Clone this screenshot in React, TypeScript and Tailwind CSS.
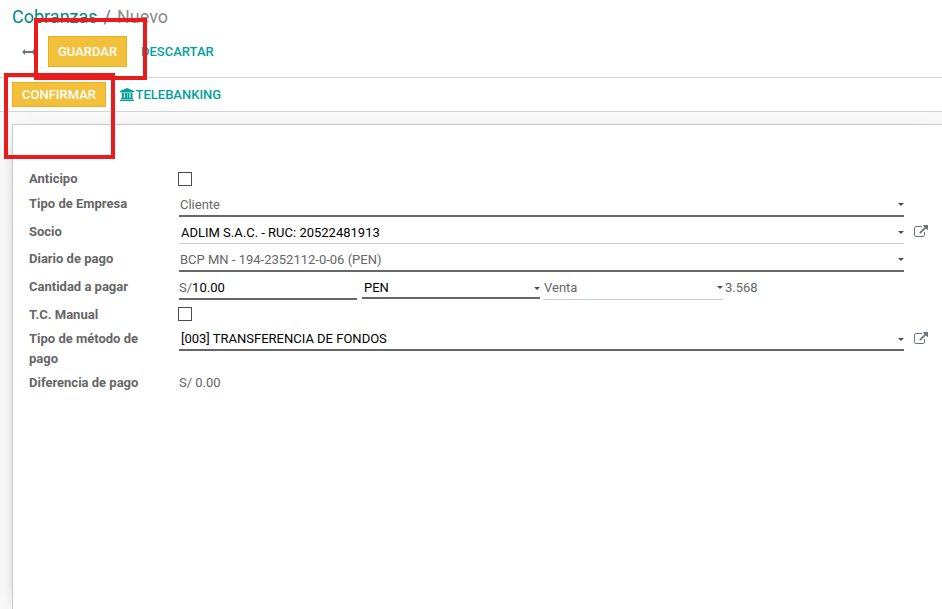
import type { ReactNode } from 'react';

interface RowProps {
  label: string;
  className: string;
  labelClassName?: string;
  children: ReactNode;
}

function Row({ label, className, labelClassName = 'pt-0.5', children }: RowProps) {
  return (
    <div className={`flex items-start ${className}`}>
      <label className={`w-[150px] shrink-0 pr-8 font-bold leading-5 text-[#666666] ${labelClassName}`}>{label}</label>
      {children}
    </div>
  );
}

function Caret() {
  return (
    <svg className="shrink-0" width="6" height="3" viewBox="0 0 6 3" fill="#4c4c4c">
      <path d="M0 0h6L3 3z" />
    </svg>
  );
}

interface SelectFieldProps {
  value: string;
  className: string;
}

function SelectField({ value, className }: SelectFieldProps) {
  return (
    <div className={`flex shrink-0 items-center justify-between ${className}`}>
      <span className="leading-5">{value}</span>
      <Caret />
    </div>
  );
}

function Checkbox() {
  return <span className="-ml-px h-3.5 w-3.5 border border-[#4c4c4c] bg-white" />;
}

function ExternalLink({ className }: { className: string }) {
  return (
    <svg className={`ml-2.5 shrink-0 ${className}`} width="14" height="12" viewBox="0 0 1792 1536" fill="#6c757d">
      <path d="M1408 928v320q0 119-84.5 203.5T1120 1536H288q-119 0-203.5-84.5T0 1248V416q0-119 84.5-203.5T288 128h704q14 0 23 9t9 23v64q0 14-9 23t-23 9H288q-66 0-113 47t-47 113v832q0 66 47 113t113 47h832q66 0 113-47t47-113V928q0-14 9-23t23-9h64q14 0 23 9t9 23zm384-864v512q0 26-19 45t-45 19-45-19l-176-176-652 652q-10 10-23 10t-23-10L695 983q-10-10-10-23t10-23l652-652-176-176q-19-19-19-45t19-45 45-19h512q26 0 45 19t19 45z" />
    </svg>
  );
}

export default function App() {
  return (
    <div className="relative flex h-[609px] w-[942px] flex-col overflow-hidden bg-white font-['Roboto',sans-serif] text-[13px] text-[#666666]">
      {/* Control panel */}
      <header className="h-[78px] shrink-0 border-b border-[#ced4da]">
        <div className="flex h-[33px] gap-1.5 pl-3 text-[18px] leading-[33px]">
          <span className="text-[#008784]">Cobranzas</span>
          <span className="text-[#6c757d]">/</span>
          <span className="text-[#8a8a8a]">Nuevo</span>
        </div>
        <div className="flex items-center pl-[22px] pt-[3px]">
          <svg width="14" height="6" viewBox="0 0 14 6" fill="#6c757d">
            <path d="M0 3l3-3v2h8V0l3 3-3 3V4H3v2z" />
          </svg>
          <button className="ml-3 h-[31px] w-[79px] border border-[#eaaf1a] bg-[#f3c03c] font-medium text-white">GUARDAR</button>
          <button className="ml-3.5 font-medium text-[#00a09d]">DESCARTAR</button>
        </div>
      </header>

      {/* Status bar */}
      <div className="flex h-[34px] shrink-0 items-center border-b border-[#ced4da] pl-3">
        <button className="h-[25px] w-[94px] border border-[#eaaf1a] bg-[#f3c03c] font-medium text-white">CONFIRMAR</button>
        <button className="ml-3.5 flex items-center gap-[1.5px] font-medium text-[#00a09d]">
          <svg width="14" height="13" viewBox="0 0 14 13" fill="currentColor">
            <path d="M7 0l7 3v1h-1v.6H1V4H0V3zM2 5h2v5h1V5h2v5h.5V5h2v5h1V5h2v5h.5v1H1v-1h1zM.5 11.4h13v.6h.5v1H0v-1h.5z" />
          </svg>
          TELEBANKING
        </button>
      </div>

      {/* Form sheet */}
      <main className="flex-1 bg-[#f8f8f8] pl-3 pt-3">
        <div className="h-full border-l border-t border-[#c8c8d3] bg-white pl-4 pt-[43px] shadow-[0_5px_20px_-15px_#000]">
          <Row label="Anticipo" className="h-6" labelClassName="pt-px">
            <div className="flex pt-1">
              <Checkbox />
            </div>
          </Row>
          <Row label="Tipo de Empresa" className="h-[25px]">
            <SelectField value="Cliente" className="h-[25px] w-[725px] border-b-2 border-[#666666] pl-px pt-0.5" />
          </Row>
          <Row label="Socio" className="h-[27px]" labelClassName="pt-[5px]">
            <SelectField value="ADLIM S.A.C. - RUC: 20522481913" className="h-[27px] w-[725px] border-b border-[#cccccc] pl-0.5 pt-[5px] text-black" />
            <ExternalLink className="mt-2" />
          </Row>
          <Row label="Diario de pago" className="h-7" labelClassName="pt-[5px]">
            <SelectField value="BCP MN - 194-2352112-0-06 (PEN)" className="h-7 w-[725px] border-b-2 border-[#666666] pl-px pt-[5px]" />
          </Row>
          <Row label="Cantidad a pagar" className="h-7" labelClassName="pt-[5px]">
            <div className="flex h-7 w-[178px] items-center border-b-2 border-[#666666] pt-1.5">
              <span className="leading-5">S/</span>
              <span className="leading-5 text-black">10.00</span>
            </div>
            <SelectField value="PEN" className="ml-[5px] h-[27px] w-[178px] border-b-2 border-[#666666] pl-0.5 pt-[7px] text-black" />
            <SelectField value="Venta" className="ml-[3px] h-7 w-[180px] border-b border-[#cccccc] pl-px pt-1" />
            <span className="ml-0.5 pt-1.5 leading-5">3.568</span>
          </Row>
          <Row label="T.C. Manual" className="h-6" labelClassName="pt-[5px]">
            <div className="flex pt-[7px]">
              <Checkbox />
            </div>
          </Row>
          <Row label="Tipo de método de pago" className="h-12" labelClassName="pt-[5px]">
            <SelectField value="[003] TRANSFERENCIA DE FONDOS" className="h-[27px] w-[725px] border-b-2 border-[#666666] pl-0.5 pt-[5px] text-black" />
            <ExternalLink className="mt-2" />
          </Row>
          <Row label="Diferencia de pago" className="h-6" labelClassName="pt-px">
            <span className="pt-px leading-5">S/ 0.00</span>
          </Row>
        </div>
      </main>

      {/* Highlight frames */}
      <div className="absolute left-[34px] top-[18px] h-[62px] w-[113px] border-4 border-[#e81c1c]" />
      <div className="absolute left-1 top-[73px] h-[86px] w-[111px] border-4 border-[#e81c1c]" />
    </div>
  );
}
